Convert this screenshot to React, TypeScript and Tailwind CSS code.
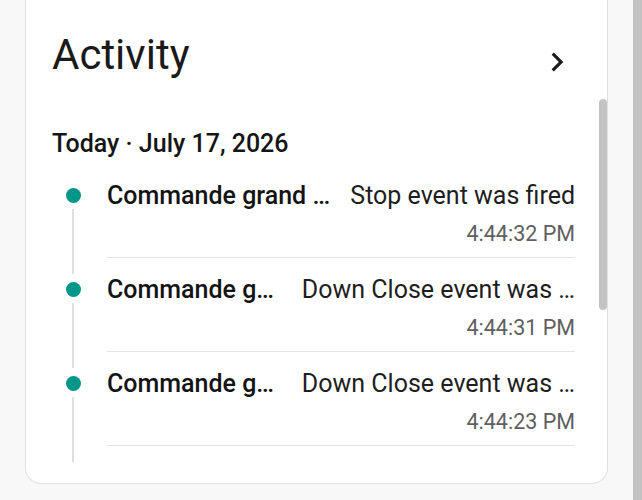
import { ReactNode } from 'react'

interface ActivityItem {
  title: string
  description: string
  time: string
}

const items: ActivityItem[] = [
  { title: 'Commande grand …', description: 'Stop event was fired', time: '4:44:32 PM' },
  { title: 'Commande g…', description: 'Down Close event was …', time: '4:44:31 PM' },
  { title: 'Commande g…', description: 'Down Close event was …', time: '4:44:23 PM' },
]

function ChevronRight() {
  return (
    <svg width="38" height="38" viewBox="0 0 24 24" className="shrink-0 text-[#1b1b1b]">
      <path fill="currentColor" d="M10 6 8.59 7.41 13.17 12l-4.58 4.59L10 18l6-6z" />
    </svg>
  )
}

function TimelineRow({ item }: { item: ActivityItem }) {
  return (
    <div className="flex">
      {/* dot + rail */}
      <div className="w-[42px] shrink-0 flex flex-col items-center">
        <span className="mt-[8px] w-[15px] h-[15px] rounded-full bg-[#009688]" />
        <span className="mt-[6px] w-[2px] flex-1 bg-[#e0e0e0]" />
      </div>

      <div className="ml-[13px] flex-1 min-w-0 pb-[16px]">
        <div className="border-b border-[#e4e4e4] pb-[9px]">
          <div className="flex items-center justify-between gap-4 text-[25px] leading-[32px]">
            <span className="font-medium text-[#141414] whitespace-nowrap">{item.title}</span>
            <span className="text-[#1e1e1e] whitespace-nowrap">{item.description}</span>
          </div>
          <div className="mt-[8px] text-right text-[21.5px] leading-[28px] text-[#5f5f5f]">{item.time}</div>
        </div>
      </div>
    </div>
  )
}

function Card({ children }: { children: ReactNode }) {
  return (
    <div className="relative ml-[25px] w-[583px] bg-white border border-t-0 border-[#e0e0e0] rounded-b-2xl">
      {children}
      {/* inner scroll thumb */}
      <div className="absolute top-[99px] right-0 w-[8px] h-[211px] rounded-full bg-[#c4c4c4]" />
    </div>
  )
}

export default function App() {
  return (
    <div className="flex w-[642px] h-[500px] overflow-hidden bg-[#f8f8f8] [font-family:Roboto,'Noto_Sans',sans-serif]">
      <div className="flex-1">
        <Card>
          {/* Header */}
          <div className="flex items-start justify-between pt-[29px] pl-[26px] pr-[31px]">
            <h2 className="text-[42px] leading-[52px] font-normal text-[#1a1a1a]">Activity</h2>
            <div className="mt-[14px]">
              <ChevronRight />
            </div>
          </div>

          {/* Timeline */}
          <div className="pl-[26px] pr-[32px] pb-[21px]">
            <div className="mt-[47px] text-[25px] leading-[32px] font-medium text-[#151515]">
              Today · July 17, 2026
            </div>
            <div className="mt-[20px]">
              {items.map((item, i) => (
                <TimelineRow key={i} item={item} />
              ))}
            </div>
          </div>
        </Card>
      </div>
      {/* page scrollbar */}
      <div className="w-[9px] h-full bg-[#c2c2c2]" />
    </div>
  )
}
